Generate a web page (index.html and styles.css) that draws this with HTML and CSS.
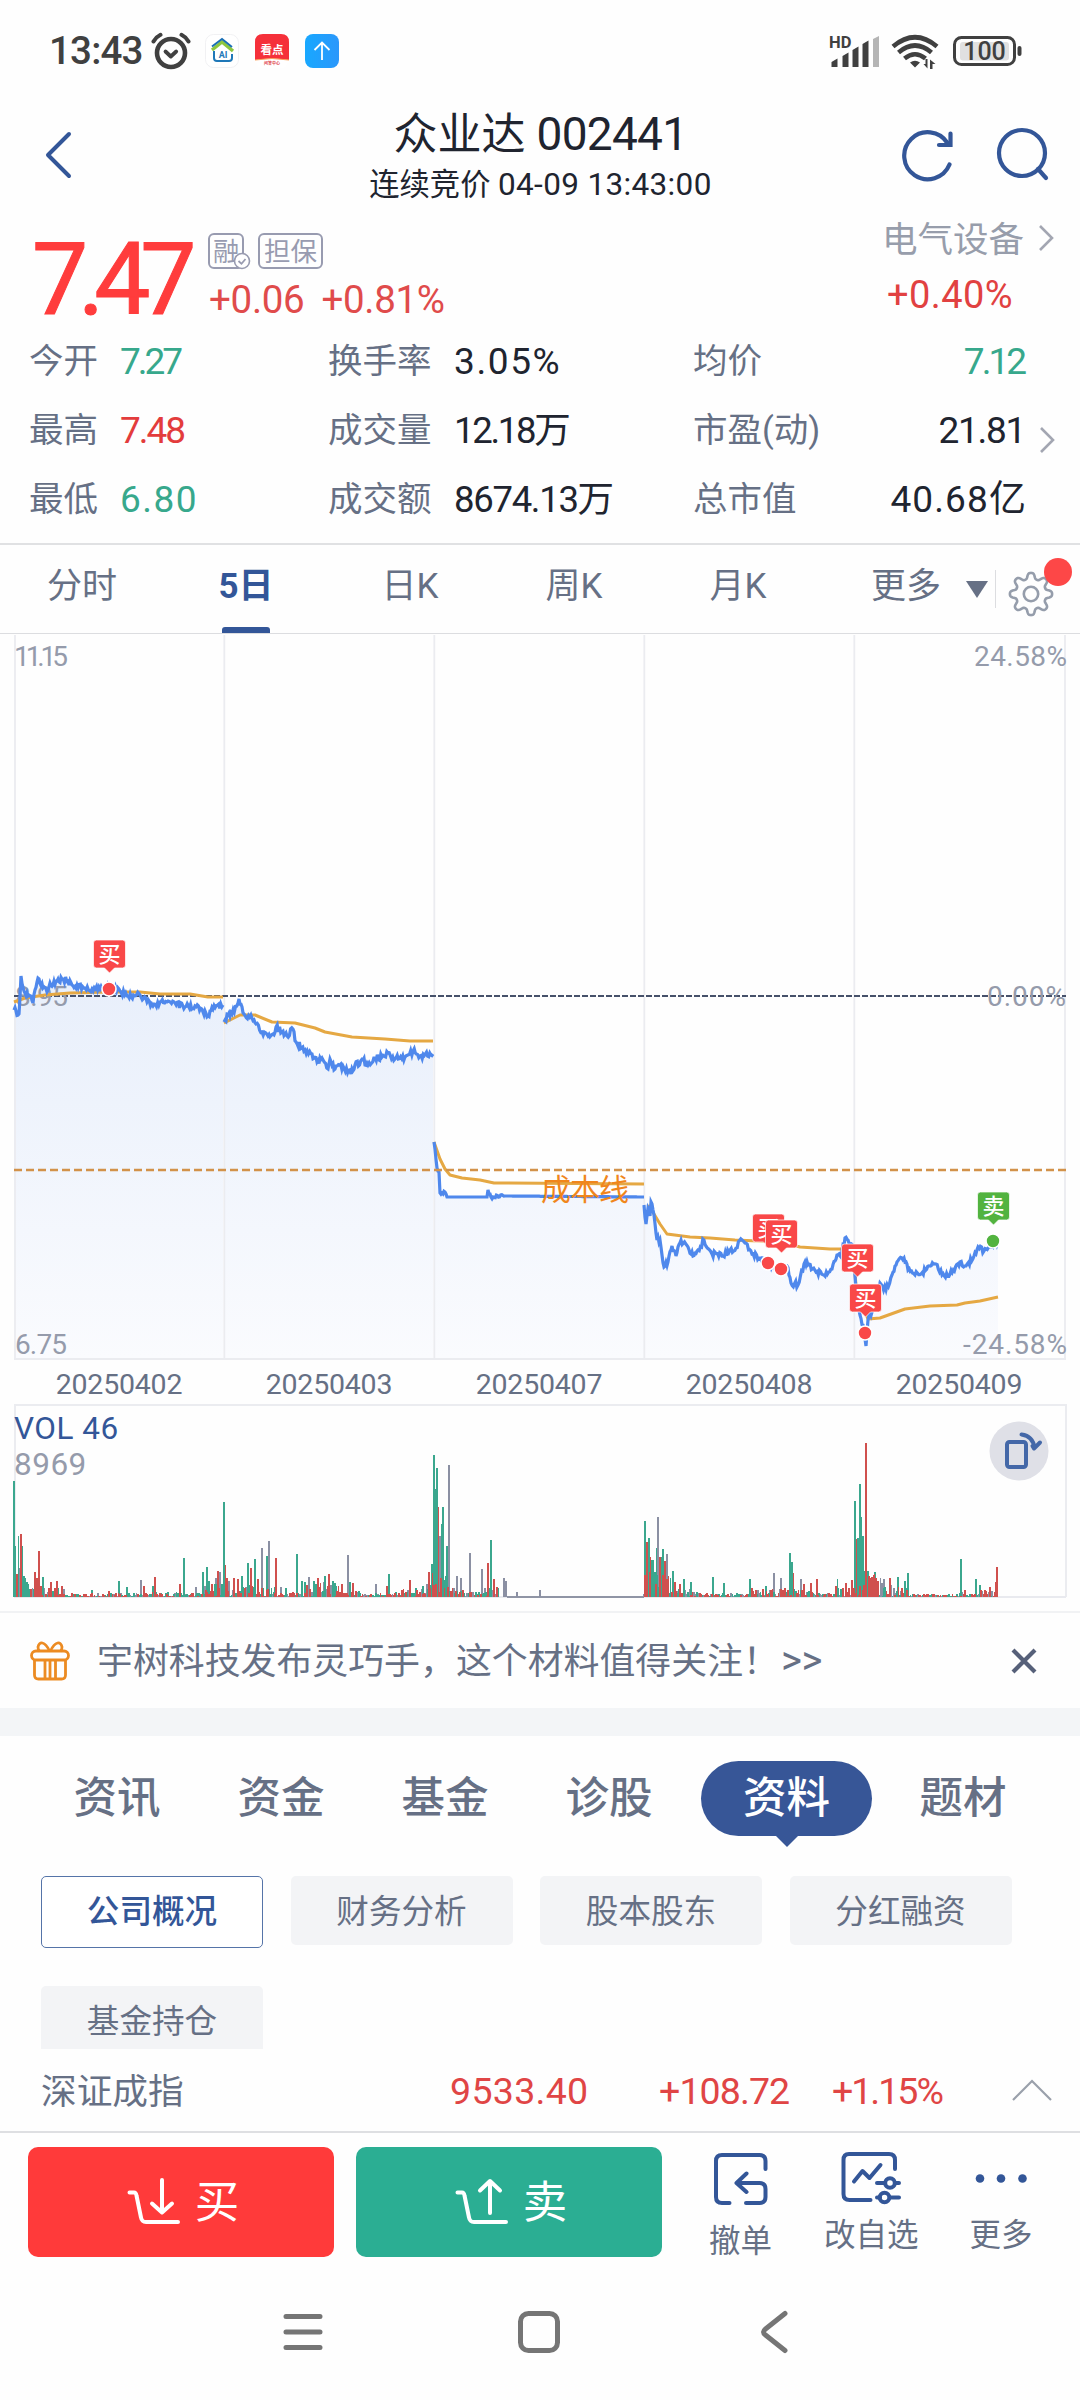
FILE: index.html
```html
<!DOCTYPE html>
<html lang="zh-CN">
<head>
<meta charset="utf-8">
<title>众业达 002441</title>
<link rel="stylesheet" href="styles.css">
</head>
<body>
<div class="phone">

  <div class="status">
    <span class="clock">13:43</span>
    <svg class="alarm" width="40" height="38" viewBox="0 0 40 38" fill="none" stroke="#404040" stroke-linecap="round" stroke-linejoin="round"><circle cx="20" cy="21" r="14" stroke-width="4.6"/><path d="M14.5 19.500 19.800 24.500 25.200 19.500" stroke-width="3.800"/><path d="M2.500 9.500Q5 5 9.500 2.800M37.500 9.500Q35 5 30.500 2.800" stroke-width="4"/></svg>
    <svg class="app" width="34" height="34" viewBox="0 0 34 34" fill="none"><rect x=".5" y=".5" width="33" height="33" rx="8" fill="#fff" stroke="#f1f1f3"/><path d="M7 16 17 8l11 9" stroke="#8dc63f" stroke-width="3.400"/><path d="M7 12.500 17 5l10 8" stroke="#1a6fb5" stroke-width="2"/><path d="M9 17v7q0 3 3 3h12q3 0 3-3v-4" stroke="#1f78b8" stroke-width="2"/><text x="18" y="23.500" text-anchor="middle" class="ai">AI</text></svg>
    <svg class="app" width="34" height="34" viewBox="0 0 34 34"><rect width="34" height="34" rx="8" fill="#fff"/><path d="M0 26V8Q0 0 8 0h18q8 0 8 8v18Q17 23 0 26Z" fill="#f5303a"/><path d="M0 26Q17 23 34 26" stroke="#f9a05a" fill="none"/><text x="17" y="19.500" text-anchor="middle" class="kan">看点</text><text x="17" y="31" text-anchor="middle" class="kan-sub">问答中心</text></svg>
    <svg class="app" width="34" height="34" viewBox="0 0 34 34"><defs><linearGradient id="sky" x1="0" x2="1"><stop offset="0" stop-color="#18a8ff"/><stop offset="1" stop-color="#2b97fb"/></linearGradient></defs><rect width="34" height="34" rx="8" fill="url(#sky)"/><path d="M17 26V9M9.500 16 17 8.500 24.500 16" fill="none" stroke="#fff" stroke-width="1.800"/></svg>
    <svg class="radio" width="196" height="36" viewBox="828 33 196 36" fill="#404040">
      <text x="830" y="47.500" class="hd">HD</text>
      <path d="M832.500 67v-5l6-3.500V67ZM843.500 67V56l6-3.500V67ZM853.500 67V50l6-3.500V67ZM863.500 67V44l6-3.500V67Z"/><path d="M874 67V39l6-3v31Z" fill="#b5b5b5"/>
      <g fill="none" stroke="#404040" stroke-width="4.600"><path d="M894 46.500Q916 28 938 46.500"/><path d="M899.500 52.500Q916 38.500 932.500 52.500"/><path d="M905.500 58.500Q916 50 926.500 58.500"/></g>
      <path d="M911 62.500Q916 59 921 62.500L916 67.500ZM928.500 59v9.500l-4-4.500h2v-5ZM931 69v-9.500l5.500 4.500h-3V69Z"/>
      <rect x="955.500" y="37.500" width="60" height="27" rx="7" fill="none" stroke="#404040" stroke-width="3"/><rect x="961" y="42" width="49" height="18.500" rx="3" fill="#e0e0e0"/><rect x="1018.500" y="46" width="4" height="10" rx="2"/>
      <text x="985.500" y="60" text-anchor="middle" class="batt">100</text>
    </svg>
  </div>

  <header class="head">
    <svg width="30" height="52" viewBox="0 0 30 52" class="back"><path d="M26 5 5 26 26 47" fill="none" stroke="#335698" stroke-width="4" stroke-linecap="round" stroke-linejoin="round"/></svg>
    <div class="title"><h1>众业达 <span>002441</span></h1><p>连续竞价 <span>04-09 13:43:00</span></p></div>
    <svg width="56" height="56" viewBox="0 0 56 56" class="refresh" fill="none" stroke="#335698" stroke-width="4.200" stroke-linecap="round"><path d="M48.500 38.500A23.500 23.500 0 1 1 46.500 17"/><path d="M49.500 7.500V19H38"/></svg>
    <svg width="54" height="56" viewBox="0 0 54 56" class="search" fill="none" stroke="#335698" stroke-width="4.200" stroke-linecap="round"><circle cx="26" cy="26" r="23"/><path d="M42 42l8 9"/></svg>
  </header>

  <section class="quote">
    <div class="last">7.47</div>
    <div class="mid">
      <div class="badges">
        <span class="badge margin">融<svg width="18" height="18" viewBox="0 0 18 18"><circle cx="9" cy="9" r="7.500" fill="#fff" stroke="#989bb0" stroke-width="1.600"/><path d="M5.500 9 8.500 11.800 12.500 7" fill="none" stroke="#989bb0" stroke-width="1.800"/></svg></span>
        <span class="badge">担保</span>
      </div>
      <div class="delta"><span>+0.06</span><span>+0.81%</span></div>
    </div>
    <div class="sector">
      <div class="sname">电气设备<svg width="18" height="28" viewBox="0 0 18 28"><path d="M3 2 15 14 3 26" fill="none" stroke="#a3a6b2" stroke-width="2.600"/></svg></div>
      <div class="spct">+0.40%</div>
    </div>
  </section>

  <section class="stats">
    <span>今开</span><b class="dn k7">7.27</b><span>换手率</span><b class="w2">3.05%</b><span>均价</span><b class="dn k7">7.12</b>
    <span>最高</span><b class="up k8">7.48</b><span>成交量</span><b class="k3">12.18万</b><span>市盈(动)</span><b class="k1">21.81</b>
    <span>最低</span><b class="dn w">6.80</b><span>成交额</span><b class="k2">8674.13万</b><span>总市值</span><b class="k0">40.68亿</b>
    <svg class="more-arrow" width="18" height="28" viewBox="0 0 18 28"><path d="M3 2 15 14 3 26" fill="none" stroke="#a3a6b2" stroke-width="2.600"/></svg>
  </section>

  <nav class="periods">
    <a>分时</a><a class="on">5日</a><a>日K</a><a>周K</a><a>月K</a><a class="more">更多<i></i></a>
    <div class="gear"><svg width="48" height="48" viewBox="-24 -24 48 48" fill="none" stroke="#959dab" stroke-width="2.600"><path id="gear" stroke-linejoin="round"/><circle r="7.200"/></svg><em></em></div>
  </nav>

  <section class="charts">
    <svg id="price" width="1080" height="726" viewBox="0 634 1080 726">
      <defs><linearGradient id="fade" gradientUnits="userSpaceOnUse" x1="0" y1="975" x2="0" y2="1358"><stop offset="0" stop-color="#e8effb"/><stop offset="1" stop-color="#fafbfe"/></linearGradient></defs>
      <path id="area" fill="url(#fade)"/>
      <path d="M15 635V1358M224.300 635V1358M434.300 635V1358M644.300 635V1358M854.300 635V1358M1065 635V1358M14 1359H1066" stroke="#ebecf0" stroke-width="1.800" fill="none"/>
      <path d="M14 996H1066" stroke="#46516a" stroke-width="2" stroke-dasharray="6 2"/>
      <g class="axis"><text x="14" y="666" textLength="54">11.15</text><text x="15" y="1006" textLength="53">8.95</text><text x="15" y="1354" textLength="52">6.75</text><text x="974" y="666" textLength="93">24.58%</text><text x="987" y="1006" textLength="79">0.00%</text><text x="963" y="1354" textLength="104">-24.58%</text></g>
      <path id="avg" fill="none" stroke="#e5a843" stroke-width="3" stroke-linejoin="round"/>
      <path id="line" fill="none" stroke="#4f88ec" stroke-width="3.200"/>
      <path d="M14 1170H1066" stroke="#d2924a" stroke-width="2.600" stroke-dasharray="8 4"/>
      <text x="541" y="1200" class="cost" textLength="88">成本线</text>
      <g id="marks"></g>
    </svg>
    <div class="dates"><span>20250402</span><span>20250403</span><span>20250407</span><span>20250408</span><span>20250409</span></div>
    <div class="volume">
      <svg id="vol" width="1080" height="196" viewBox="0 1403 1080 196" shape-rendering="crispEdges"><path d="M15 1597V1405H1065.500V1597" fill="none" stroke="#ebecf0" stroke-width="2"/><path d="M14 1596.500H1066" stroke="#e9eaef" stroke-width="2"/></svg>
      <div class="vlabel"><b>VOL 46</b><span>8969</span></div>
      <svg class="rotate" width="60" height="60" viewBox="0 0 60 60"><circle cx="30" cy="30" r="29.500" fill="#dfe0e7"/><g fill="none" stroke="#4468a8" stroke-width="4" stroke-linecap="round" stroke-linejoin="round"><rect x="18" y="21" width="19" height="25" rx="2.500"/><path d="M32.500 13.500Q44 15 45.500 27M51 21.500 45 27.500 43.500 25"/></g></svg>
    </div>
  </section>

  <section class="notice">
    <svg width="40" height="40" viewBox="0 0 40 40" fill="none" stroke="#ec8b22" stroke-width="2.800" stroke-linejoin="round"><rect x="1.500" y="10" width="37" height="9" rx="4.500"/><path d="M4.500 19v15q0 4 4 4h23q4 0 4-4V19M15 19v19M20 19v19M25.500 19v19M19.500 10C15 0 9 0 8 6q0 3 1.500 4M20.500 10C25 0 31 0 32 6q0 3-1.500 4"/></svg>
    <p>宇树科技发布灵巧手，这个材料值得关注！<span>&gt;&gt;</span></p>
    <svg width="26" height="26" viewBox="0 0 26 26"><path d="M2 2 24 24M24 2 2 24" stroke="#566079" stroke-width="4.200"/></svg>
  </section>
  <div class="band"></div>

  <nav class="topics"><a>资讯</a><a>资金</a><a>基金</a><a>诊股</a><a class="on">资料</a><a>题材</a></nav>
  <section class="subs"><a class="on">公司概况</a><a>财务分析</a><a>股本股东</a><a>分红融资</a><a>基金持仓</a></section>

  <section class="index"><span>深证成指</span><b>9533.40</b><b>+108.72</b><b>+1.15%</b><svg width="42" height="24" viewBox="0 0 42 24"><path d="M2 22 21 3 40 22" fill="none" stroke="#9aa0ab" stroke-width="2.200"/></svg></section>

  <footer class="actions">
    <a class="btn buy"><svg width="54" height="50" viewBox="0 0 54 50" fill="none" stroke="#fff" stroke-width="4" stroke-linecap="round" stroke-linejoin="round"><path d="M2.500 15.500H7q2 0 2.500 3l4.500 22q.8 4.500 5 4.500h32M35 3v31M25 26.500 35 35.500 45 26.500"/></svg><span>买</span></a>
    <a class="btn sell"><svg width="54" height="50" viewBox="0 0 54 50" fill="none" stroke="#fff" stroke-width="4" stroke-linecap="round" stroke-linejoin="round"><path d="M2.500 15.500H7q2 0 2.500 3l4.500 22q.8 4.500 5 4.500h32M35 36V5M25 13.500 35 4 45 13.500"/></svg><span>卖</span></a>
    <a class="tool t1"><svg width="56" height="54" viewBox="0 0 56 54"><path d="M52.500 17V9q0-6-6-6H9Q3 3 3 9v36q0 6 6 6h7.500M33 51h13.500q6 0 6-6V37q0-6-6-6H24M33.500 21.500 23.500 31l10 9"/></svg>撤单</a>
    <a class="tool t2"><svg width="60" height="54" viewBox="0 0 60 54"><path d="M54 18V9q0-6-6-6H8Q2.500 3 2.500 9v34q0 6 6 6H29.500M13 30.500 21.500 20 28.500 27 39.500 14M36 32h8M54 32h4M36 46.500h3M49 46.500h9"/><circle cx="49" cy="32" r="4.800"/><circle cx="43.500" cy="46.500" r="4.800"/></svg>改自选</a>
    <a class="tool t3"><svg width="56" height="54" viewBox="0 0 56 54"><g class="dots"><circle cx="7" cy="28.500" r="4.300"/><circle cx="28" cy="28.500" r="4.300"/><circle cx="49.500" cy="28.500" r="4.300"/></g></svg>更多</a>
  </footer>

  <div class="sysnav">
    <svg width="40" height="44" viewBox="0 0 40 44"><path d="M3 6.500H37M3 22H37M3 37.500H37"/></svg>
    <svg width="44" height="44" viewBox="0 0 44 44"><rect x="3.500" y="3.500" width="37" height="37" rx="8"/></svg>
    <svg width="30" height="44" viewBox="0 0 30 44"><path d="M26 3.500 6.500 19q-4 3 0 6L26 40.500"/></svg>
  </div>
</div>
<script src="chart.js"></script>
</body>
</html>
```
FILE: styles.css
```css
* { box-sizing: border-box; }
body { margin: 0; background: #fefefe; }
svg { display: block; flex: none; }
h1, p { margin: 0; font-weight: 400; }
b { font-weight: 400; }
.phone { width: 1080px; height: 2400px; overflow: hidden; display: flex; flex-direction: column; font-family: Roboto, "Noto Sans CJK SC", sans-serif; color: #667085; white-space: nowrap; }
.phone > * { flex: none; }

.status { height: 100px; display: flex; align-items: center; padding: 2px 57px 0 49px; }
.clock { font-size: 38.5px; font-weight: 500; color: #404040; line-height: 40px; letter-spacing: -.8px; width: 102px; }
.alarm { margin-right: 14px; }
.app { margin-right: 16px; }
.radio { margin-left: auto; }
.ai { font: 700 9px Roboto, sans-serif; fill: #1f78b8; }
.kan { font: 700 11.5px "Noto Sans CJK SC", sans-serif; fill: #fff; }
.kan-sub { font: 700 4px "Noto Sans CJK SC", sans-serif; fill: #e0454a; }
.hd { font: 700 16.5px Roboto, sans-serif; }
.batt { font: 500 25px Roboto, sans-serif; }

.head { height: 110px; display: flex; align-items: flex-start; padding: 0 30px 0 43px; color: #20242f; }
.back { margin-top: 29px; }
.title { margin-left: 77px; width: 782px; text-align: center; padding-top: 7px; }
.title h1 { font-size: 44px; line-height: 54px; }
.title h1 span { font-size: 46px; letter-spacing: -.7px; }
.title p { font-size: 30.3px; line-height: 45px; }
.title p span { font-size: 31.5px; letter-spacing: .35px; }
.refresh { margin: 26px 0 0 -30px; }
.search { margin: 27px 0 0 39px; }

.quote { height: 117px; display: flex; padding-left: 32px; }
.last { width: 176px; font-size: 100px; line-height: 140px; font-weight: 400; color: #ff3c3c; letter-spacing: -10.2px; -webkit-text-stroke: 1px #ff3c3c; }
.mid { width: 674px; padding-top: 23px; }
.badges { display: flex; gap: 14px; }
.badge { height: 36px; border: 2px solid #989bb0; border-radius: 6px; font-size: 26.5px; line-height: 33px; padding: 0 4px; color: #989bb0; }
.badge.margin { width: 36px; padding-left: 3px; position: relative; }
.badge svg { position: absolute; right: -9px; bottom: -3px; }
.delta { display: flex; gap: 17px; padding-left: 1px; font-size: 38.5px; line-height: 51px; padding-top: 5px; color: #e04b4b; letter-spacing: -.3px; }
.sector { padding-top: 9px; }
.sname { display: flex; align-items: center; font-size: 35.500px; line-height: 40px; color: #979dab; padding-top: 1px; height: 40px; }
.sname svg { margin-left: 13px; margin-top: -4px; }
.spct { font-size: 38px; line-height: 62px; padding-left: 5px; color: #e14141; margin-top: 5px; letter-spacing: .4px; }

.stats { height: 218px; border-bottom: 2px solid #e0e1e3; display: grid; grid-template-columns: 90px 209px 125px 240px 130px 203px; grid-auto-rows: 69px; padding-left: 29px; line-height: 69px; font-size: 34.500px; position: relative; }
.stats b { color: #20242f; font-size: 37px; letter-spacing: -1px; padding-left: 1px; }
.stats b:nth-of-type(3n) { text-align: right; }
.stats b.k7 { letter-spacing: -3px; }
.stats b.k7:nth-of-type(3n) { padding-right: 2px; }
.stats b.k8 { letter-spacing: -2px; }
.stats b.k1 { letter-spacing: -1.300px; padding-right: 1px; }
.stats b.k3 { letter-spacing: -2.300px; font-size: 36.500px; }
.stats b.k2 { letter-spacing: -1.300px; font-size: 36.500px; }
.stats b.k0 { letter-spacing: 1.100px; padding-right: 0; margin-right: -1px; }
.stats b.w { letter-spacing: 1.500px; }
.stats b.w2 { letter-spacing: 1.600px; }
.stats b.dn { color: #37a88c; }
.stats b.up { color: #e33c3c; }
.more-arrow { position: absolute; left: 1038px; top: 99px; }

.periods { height: 89px; border-bottom: 1px solid #dcdde0; display: flex; line-height: 83px; font-size: 35px; position: relative; }
.periods a { width: 164px; text-align: center; height: 89px; }
.periods a.on { color: #335698; font-weight: 700; position: relative; }
.periods a.on::after { content: ""; position: absolute; left: 58px; bottom: 1px; width: 48px; height: 6px; border-radius: 3px 3px 0 0; background: #335698; }
.periods a.more { display: flex; align-items: center; padding: 0 0 6px 51px; width: 175px; }
.periods i { margin: 5px 0 0 25px; border: 11px solid transparent; border-top: 17px solid #667085; border-bottom: 0; }
.periods .gear { position: absolute; right: 0; top: 25px; width: 85px; height: 38px; border-left: 1px solid #dcdde0; }
.gear svg { margin: 0 0 0 11px; }
.gear em { position: absolute; right: 8px; top: -12px; width: 28px; height: 28px; border-radius: 50%; background: #fd4747; }

.charts { height: 977px; }
.axis { font-size: 28px; fill: #959bab; }
.cost { font-size: 30px; fill: #f0861c; }
.tag { font: 500 22px "Noto Sans CJK SC", sans-serif; fill: #fff; }
.dates { display: grid; grid-template-columns: repeat(5, 210px); padding-left: 14px; height: 43px; line-height: 49px; font-size: 28.500px; letter-spacing: -.2px; text-align: center; }
.volume { position: relative; height: 196px; }
.vlabel { position: absolute; left: 14px; top: 8px; display: grid; font-size: 31.500px; line-height: 36px; color: #959bab; letter-spacing: .5px; }
.vlabel b { color: #335698; }
.rotate { position: absolute; left: 989px; top: 18px; }

.notice { height: 97px; border-top: 2px solid #f1f2f4; padding: 0 43px 0 30px; display: flex; align-items: center; font-size: 35.900px; }
.notice p { flex: 1; padding: 0 0 5px 27px; }
.notice p span { font-size: 40px; letter-spacing: -.3px; line-height: 30px; padding-left: 2px; }
.band { height: 28px; background: #f3f5f7; }

.topics { height: 140px; padding: 25px 0 0 35px; display: flex; font-size: 43.500px; line-height: 75px; font-weight: 500; }
.topics a { width: 164px; height: 75px; text-align: center; }
.topics a.on { width: 171px; margin-left: 10px; margin-right: 9px; background: #375697; border-radius: 38px; color: #fff; position: relative; }
.topics a.on::after { content: ""; position: absolute; left: 74px; top: 74px; border: 12px solid transparent; border-top-color: #375697; border-bottom: 0; }
.subs { height: 173px; overflow: hidden; padding-left: 41px; display: grid; grid-template-columns: repeat(4, 222px); column-gap: 27.500px; row-gap: 38px; grid-template-rows: 72px 63px; font-size: 32.600px; text-align: center; line-height: 72px; }
.subs a { background: #f3f4f6; border-radius: 5px; height: 69px; }
.subs a.on { height: 72px; background: #fff; border: 1.500px solid #5574a8; color: #335698; font-weight: 500; line-height: 71px; }
.subs a:last-child { height: 63px; border-radius: 5px 5px 0 0; }

.index { height: 84px; border-bottom: 2px solid #dedfe2; display: flex; align-items: center; font-size: 35.700px; padding: 0 27px 0 41px; }
.index span { width: 409px; padding-bottom: 4px; }
.index b { font-size: 37.500px; color: #e04545; width: 209px; letter-spacing: .3px; padding-top: 1px; }
.index b + b { width: 173px; letter-spacing: -.9px; }
.index b + b + b { width: 179px; letter-spacing: -2px; }

.actions { height: 140px; padding: 14px 0 0 28px; display: flex; }
.btn { width: 306px; height: 110px; margin-right: 22px; border-radius: 10px; color: #fff; font-size: 44.500px; display: flex; align-items: center; justify-content: center; padding-left: 4px; }
.btn svg { margin-right: 14px; }
.btn span { padding-bottom: 7px; }
.buy { background: #ff3a3a; }
.sell { background: #2bae93; }
.tool { display: flex; flex-direction: column; align-items: center; font-size: 31.500px; line-height: 40px; padding-top: 5px; }
.tool svg { fill: none; stroke: #335698; stroke-width: 4; stroke-linecap: round; stroke-linejoin: round; }
.tool .dots { fill: #335698; stroke: none; }
.t1 { margin-left: 25px; gap: 16px; }
.t2 { margin-left: 52px; gap: 11px; padding-top: 4px; }
.t3 { margin-left: 51px; gap: 12px; padding-top: 3px; }

.sysnav { display: flex; padding: 37px 0 0 283px; }
.sysnav svg { fill: none; stroke: #757575; stroke-width: 5; stroke-linecap: round; }
.sysnav svg + svg { margin-left: 194px; }
.sysnav svg + svg + svg { margin-left: 198px; }
```
FILE: chart.js
```js
// Five trading days of intraday prices, as anchor points in chart coordinates.
const prices = [
  [14,1010,19,1014,21,976,25,993,29,995,33,1003,35,990,38,978,43,988,47,992,50,983,53,985,57,981,62,979,68,981,72,985,77,985,85,988,92,989,100,989,109,989,120,991,128,996,140,995,147,1002,153,1006,160,1002,168,1001,175,1003,185,1007,195,1006,203,1012,208,1016,213,1009,223,1005],
  [224,1022,229,1013,232,1014,239,999,244,1014,252,1018,256,1024,262,1032,268,1036,273,1034,276,1027,282,1032,287,1036,293,1029,296,1042,305,1050,312,1054,317,1062,322,1058,328,1069,330,1059,335,1069,343,1066,351,1074,355,1065,363,1060,368,1065,375,1058,382,1057,388,1053,395,1059,405,1057,413,1051,420,1056,433,1054],
  [434,1142,437,1168,439,1172,440,1193,445,1192,447,1197,487,1197,488,1190,491,1197,505,1196,644,1197],
  [644,1205,646,1224,648,1208,650,1216,651,1202,654,1215,657,1240,660,1240,664,1267,668,1262,672,1246,676,1256,681,1240,688,1247,693,1256,698,1250,704,1240,712,1254,722,1256,730,1250,736,1248,742,1240,745,1243,752,1254,760,1258,768,1265,780,1269,787,1266,791,1283,798,1285,804,1264,809,1264,816,1272,824,1275,832,1269,837,1255,841,1257,845,1238,850,1244,853,1247],
  [854,1258,856,1290,860,1315,863,1325,866,1346,868,1320,872,1312,876,1295,880,1283,886,1290,892,1275,897,1262,904,1258,908,1270,915,1275,921,1274,930,1266,936,1264,942,1275,950,1274,960,1262,966,1266,974,1256,978,1247,984,1251,998,1240]
];
const averages = [
  "14,1002 25,998 45,995 70,993 109,992 140,992 160,994 190,994 208,997 223,997",
  "224,1023 240,1015 255,1015 272,1022 295,1023 315,1028 325,1032 352,1037 385,1039 410,1041 433,1041",
  "434,1142 440,1159 445,1169 450,1175 462,1178 480,1180 494,1183 644,1184",
  "648,1205 654,1214 660,1224 667,1234 690,1237 710,1238 735,1240 780,1242 800,1247 830,1249 853,1249",
  "854,1262 856,1285 862,1305 868,1319 880,1318 905,1309 930,1306 957,1305 965,1303 980,1301 998,1297"
];
let seed = 41;
const rnd = () => (seed = (seed * 16807) % 2147483647) / 2147483647;

let line = "", area = "";
prices.forEach((p, day) => {
  const pts = [];
  for (let i = 0; i + 3 < p.length; i += 2) {
    const [x0, y0, x1, y1] = p.slice(i, i + 4);
    const n = Math.max(1, Math.round((x1 - x0) / 1.1));
    for (let k = 0; k < n; k++) {
      const calm = day === 2 && (x0 >= 505 || (x0 >= 447 && x0 < 487));
      const wave = k === 0 || calm ? 0 : (rnd() - .5) * (day === 2 ? 4 : 6.5);
      pts.push((x0 + (x1 - x0) * k / n).toFixed(1) + "," + (y0 + (y1 - y0) * k / n + wave).toFixed(1));
    }
  }
  pts.push(p.slice(-2).join());
  line += "M" + pts.join("L");
  area += "M" + p[0] + ",1358L" + pts.join("L") + "V1358Z";
});
document.getElementById("line").setAttribute("d", line);
document.getElementById("area").setAttribute("d", area);
document.getElementById("avg").setAttribute("d", averages.map(a => "M" + a.replace(/ /g, "L")).join(""));

// Trade markers: tag centre, tag top, dot position.
const marks = [[109.5,940,109,989],[768.5,1214,768,1263],[781.500,1220,781,1269],[857.500,1244],[865.500,1284,865,1333],[993.500,1192,993,1241,1]];
const dots = [], tags = [];
marks.forEach(([x, y, dx, dy, sell]) => {
  const fill = sell ? "#52b33f" : "#f94848";
  if (dx) dots.push(`<circle cx="${dx}" cy="${dy}" r="7" fill="${fill}" stroke="#fff" stroke-width="1.6"/>`);
  tags.push(`<path d="M${x - 13} ${y}h26q3 0 3 3v22q0 3 -3 3h-8l-5 5l-5 -5h-8q-3 0 -3 -3v-22q0 -3 3 -3Z" fill="${fill}" stroke="#fff" stroke-opacity=".7"/><text x="${x}" y="${y + 22}" text-anchor="middle" class="tag">${sell ? "卖" : "买"}</text>`);
});
document.getElementById("marks").innerHTML = dots.join("") + tags.join("");

// Volume: background activity by range, then the individual peaks.
const bars = { g: "", r: "", n: "" };
const add = (x, h, c) => { bars[c] += `M${x} 1597V${1596 - h}`; };
const ranges = [[30,62,9],[62,150,3],[150,205,4],[205,245,13],[245,275,14],[275,300,4],[300,340,14],[340,360,6],[360,395,3],[395,430,8],[430,449,30],[450,465,8],[466,480,4],[480,498,9],[644,672,28],[672,700,7],[700,752,3],[752,790,8],[790,812,8],[812,836,3],[836,860,9],[860,884,22],[884,908,11],[908,960,2],[960,975,4],[975,985,7],[985,998,6]];
for (const [a, b, h] of ranges)
  for (let x = a; x < b; x += 1.2) {
    const c = "grnrg"[Math.floor(rnd() * 5)];
    add(x.toFixed(1), (h * rnd() ** 1.2).toFixed(1), c);
  }
const peaks = "14:115g 15.5:50g 17:22r 18.5:60g 20:28n 21:62r 22.5:50g 24:20g 25.5:18g 27:14g 28.5:12g 35:24r 37:18r 39:45r 41:10r 43:19g 51:14r 57:15r 62:10r 64:7n 92:6g 109:5r 119:15g 127:9g 141:16n 144:10r 153:10g 155:19r 180:12r 184:38g 196:9n 203:24g 207:29g 209:15g 216:18n 218:25r 220:24n 224:94g 225.5:31r 227:18r 229:15n 234:18r 238:17r 242:20g 248:33g 251:28r 255:37g 258:17r 262:48n 267:40g 269:55n 276:38r 281:9n 286:8g 297:42g 302:15g 305:14g 309:19n 314:15g 318:18r 325:20g 329:22r 333:15g 336:10g 342:12r 348:41n 350:14g 353:13r 376:12n 387:10r 389:22g 410:16r 416:8g 423:10g 427:12n 429:24r 432:32g 434:141g 435.5:107g 437:128g 438.5:89r 440:60n 441.5:72g 443:89g 445:16g 447:50g 449:131n 457:20n 461:18n 470:43n 482:27n 488:33r 491:56g 494:17r 497:9r 504:18n 506:15n 517:4n 540:6n 645:75g 647:54r 649:58g 650.5:39r 652:36g 653.5:36g 655:24g 656.5:48g 658:79n 660:39r 661.500:39g 663:47g 665:35r 667:42n 668.500:20r 673:25g 675:14r 680:12r 684:17g 691:14g 713:19g 724:13g 750:17g 766:10g 774:23n 781:18n 785:8r 790:43g 792:34g 793.500:23r 801:17n 804:12r 811:13r 817:17r 836:10r 837.500:17g 841:7n 846:13r 852:16r 855:95g 856.500:57r 858:58g 860:112g 861.500:79g 863:60g 864.500:25g 866:153r 868:25g 869:20r 870.500:18r 872:19r 873.500:21r 875:24g 878:15r 884:17n 890:18r 898:19g 905:15g 908:23g 961:37g 965:6r 976:17g 980:11g 990:9r 995.500:14r 997:29r";
for (const p of peaks.split(" ")) {
  const [x, rest] = p.split(":");
  add(x, parseFloat(rest), rest.slice(-1));
}
const hue = { n: "#8b90a3", r: "#d0504e", g: "#3ba78e" };
document.getElementById("vol").insertAdjacentHTML("beforeend",
  '<path d="M507 1596.500H644" stroke="#9095a5" stroke-width="2"/>' +
  ["n", "g", "r"].map(c => `<path d="${bars[c]}" stroke="${hue[c]}" stroke-width="1.8"/>`).join(""));

// Gear outline with eight rounded teeth.
let gear = "";
for (let i = 0; i <= 240; i++) {
  const t = i / 240 * Math.PI * 2;
  const r = 18.200 + 3.200 * Math.tanh(1.500 * Math.cos(8 * t));
  gear += (i ? "L" : "M") + (r * Math.sin(t)).toFixed(2) + " " + (-r * Math.cos(t)).toFixed(2);
}
document.getElementById("gear").setAttribute("d", gear + "Z");
```
